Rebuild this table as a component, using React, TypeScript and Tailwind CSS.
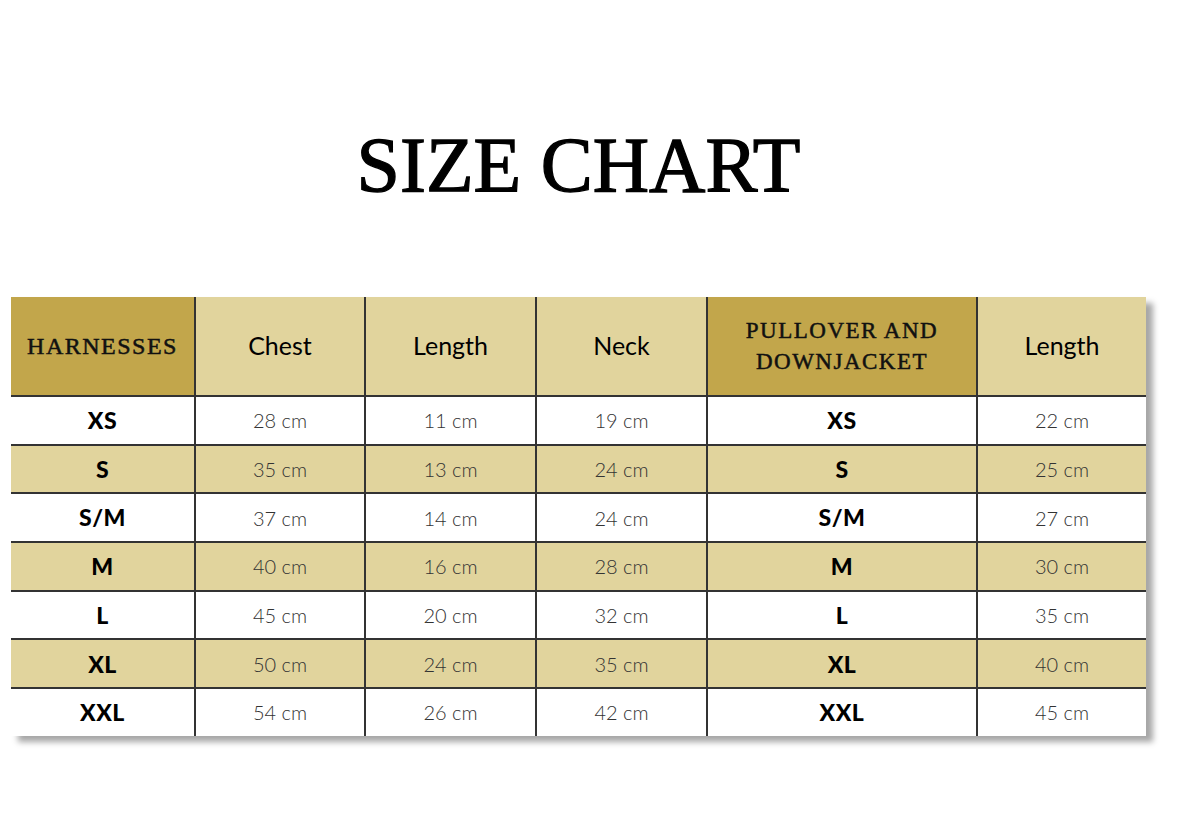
import React from "react";

const rows = [
  { size: "XS", chest: 28, length: 11, neck: 19, pull: "XS", pullLength: 22 },
  { size: "S", chest: 35, length: 13, neck: 24, pull: "S", pullLength: 25 },
  { size: "S/M", chest: 37, length: 14, neck: 24, pull: "S/M", pullLength: 27 },
  { size: "M", chest: 40, length: 16, neck: 28, pull: "M", pullLength: 30 },
  { size: "L", chest: 45, length: 20, neck: 32, pull: "L", pullLength: 35 },
  { size: "XL", chest: 50, length: 24, neck: 35, pull: "XL", pullLength: 40 },
  { size: "XXL", chest: 54, length: 26, neck: 42, pull: "XXL", pullLength: 45 },
];

const serif = "font-['Liberation_Serif','DejaVu_Serif',serif]";
const sans = "font-['Lato','Open_Sans',sans-serif]";

function HeadCell({ children, dark, first }: { children: React.ReactNode; dark?: boolean; first?: boolean }) {
  return (
    <div
      className={`flex items-center justify-center text-center ${dark ? "bg-[#c2a64b]" : "bg-[#e1d49d]"} ${first ? "" : "border-l-2 border-[#333]"}`}
    >
      {children}
    </div>
  );
}

function Cell({ children, shaded, first, bold }: { children: React.ReactNode; shaded: boolean; first?: boolean; bold?: boolean }) {
  return (
    <div
      className={`flex items-center justify-center border-t-2 border-[#333] ${shaded ? "bg-[#e1d49d]" : "bg-white"} ${first ? "" : "border-l-2"} ${
        bold ? "text-[23px] font-black tracking-[0.5px] text-black" : "text-[20px] font-light text-[#333]"
      } ${sans}`}
    >
      {children}
    </div>
  );
}

export default function App() {
  return (
    <div className="min-h-[823px] bg-white">
      <div className="ml-[11px] w-[1135px] pt-[126px]">
        <h1 className={`${serif} text-center text-[78px] leading-none text-black [-webkit-text-stroke:1.3px_#000]`}>SIZE CHART</h1>

        <div className="mt-[93px] grid grid-cols-[183px_170px_171px_171px_270px_170px] grid-rows-[98px_repeat(7,48.7px)] shadow-[7px_6px_6px_rgba(0,0,0,0.35)]">
          <HeadCell dark first>
            <span className={`${serif} text-[24px] tracking-[1.5px] text-[#111] [-webkit-text-stroke:0.5px_#111]`}>HARNESSES</span>
          </HeadCell>
          <HeadCell>
            <span className={`${sans} text-[25px] text-black`}>Chest</span>
          </HeadCell>
          <HeadCell>
            <span className={`${sans} text-[25px] text-black`}>Length</span>
          </HeadCell>
          <HeadCell>
            <span className={`${sans} text-[25px] text-black`}>Neck</span>
          </HeadCell>
          <HeadCell dark>
            <span className={`${serif} text-[23px] leading-[31px] tracking-[1.5px] text-[#111] [-webkit-text-stroke:0.5px_#111]`}>
              PULLOVER AND
              <br />
              DOWNJACKET
            </span>
          </HeadCell>
          <HeadCell>
            <span className={`${sans} text-[25px] text-black`}>Length</span>
          </HeadCell>

          {rows.map((r, i) => {
            const shaded = i % 2 === 1;
            return (
              <React.Fragment key={r.size}>
                <Cell shaded={shaded} first bold>
                  {r.size}
                </Cell>
                <Cell shaded={shaded}>{r.chest} cm</Cell>
                <Cell shaded={shaded}>{r.length} cm</Cell>
                <Cell shaded={shaded}>{r.neck} cm</Cell>
                <Cell shaded={shaded} bold>
                  {r.pull}
                </Cell>
                <Cell shaded={shaded}>{r.pullLength} cm</Cell>
              </React.Fragment>
            );
          })}
        </div>
      </div>
    </div>
  );
}
